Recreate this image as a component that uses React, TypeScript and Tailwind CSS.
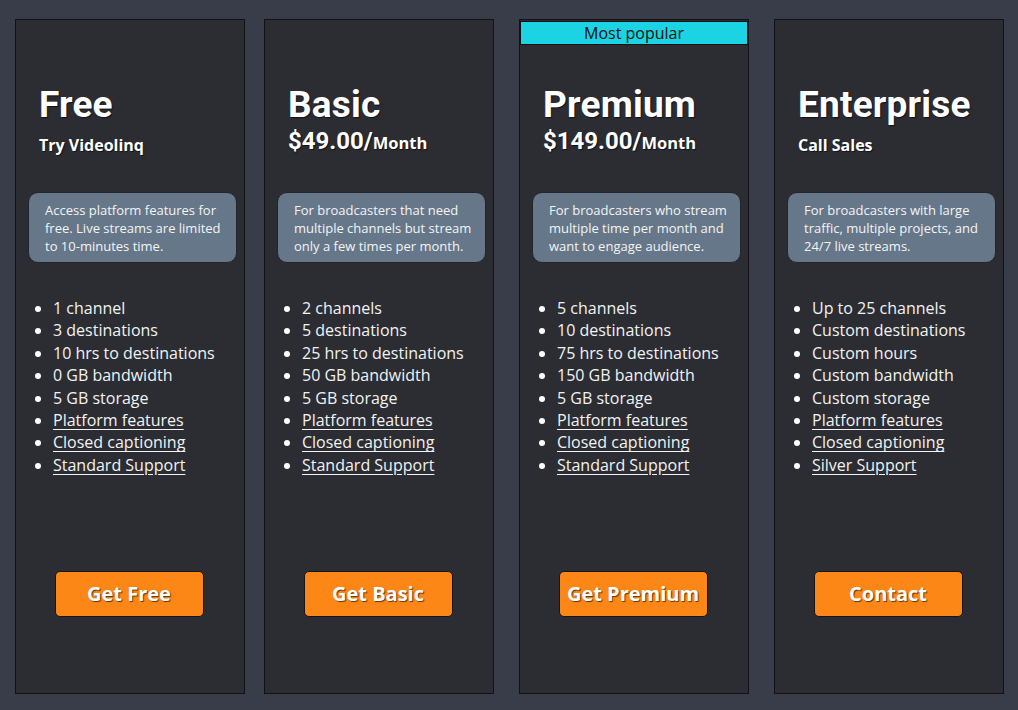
import React from "react";

type Plan = {
  name: string;
  price?: string;
  sub?: string;
  desc: string;
  features: string[];
  links: string[];
  cta: string;
  popular?: boolean;
};

const plans: Plan[] = [
  {
    name: "Free",
    sub: "Try Videolinq",
    desc: "Access platform features for free. Live streams are limited to 10-minutes time.",
    features: ["1 channel", "3 destinations", "10 hrs to destinations", "0 GB bandwidth", "5 GB storage"],
    links: ["Platform features", "Closed captioning", "Standard Support"],
    cta: "Get Free",
  },
  {
    name: "Basic",
    price: "$49.00",
    desc: "For broadcasters that need multiple channels but stream only a few times per month.",
    features: ["2 channels", "5 destinations", "25 hrs to destinations", "50 GB bandwidth", "5 GB storage"],
    links: ["Platform features", "Closed captioning", "Standard Support"],
    cta: "Get Basic",
  },
  {
    name: "Premium",
    price: "$149.00",
    desc: "For broadcasters who stream multiple time per month and want to engage audience.",
    features: ["5 channels", "10 destinations", "75 hrs to destinations", "150 GB bandwidth", "5 GB storage"],
    links: ["Platform features", "Closed captioning", "Standard Support"],
    cta: "Get Premium",
    popular: true,
  },
  {
    name: "Enterprise",
    sub: "Call Sales",
    desc: "For broadcasters with large traffic, multiple projects, and 24/7 live streams.",
    features: ["Up to 25 channels", "Custom destinations", "Custom hours", "Custom bandwidth", "Custom storage"],
    links: ["Platform features", "Closed captioning", "Silver Support"],
    cta: "Contact",
  },
];

const shadow = "[text-shadow:1px_1px_1px_rgba(0,0,0,0.6)]";

function PlanCard({ plan, className }: { plan: Plan; className?: string }) {
  return (
    <div
      className={`relative flex h-[675px] w-[230px] shrink-0 flex-col border border-[#111215] bg-[#2b2d33] ${className ?? ""}`}
    >
      {plan.popular && (
        <div className="absolute left-0 right-0 top-[1px] h-[24px] border border-[#111215] bg-[#1bd3e2] text-center text-[16px] leading-[22px] text-[#111]">
          Most popular
        </div>
      )}

      <div className="h-[172px] pl-[23px] pt-[66px] text-white">
        <h2 className={`font-['Roboto',sans-serif] text-[37px] font-bold leading-[37px] tracking-[0.2px] ${shadow}`}>
          {plan.name}
        </h2>
        {plan.price ? (
          <div className={`font-['Roboto',sans-serif] text-[24px] font-bold leading-[36px] ${shadow}`}>
            {plan.price}/<span className="font-['Open_Sans',sans-serif] text-[16.5px]">Month</span>
          </div>
        ) : (
          <div className={`mt-[10px] text-[16px] font-bold leading-[24px] ${shadow}`}>{plan.sub}</div>
        )}
      </div>

      <div className="ml-[12px] h-[71px] w-[209px] rounded-[10px] border border-[#22252b] bg-[#66778a] pl-[16px] pr-[10px] pt-[8px] text-[13px] leading-[18px] text-[#f4f4f4]">
        {plan.desc}
      </div>

      <ul className="ml-[37px] mt-[34px] list-disc text-[16px] leading-[22.4px] text-[#f2f2f2] marker:text-white">
        {plan.features.map((f) => (
          <li key={f}>{f}</li>
        ))}
        {plan.links.map((f) => (
          <li key={f}>
            <a href="#" className="underline underline-offset-[3px]">
              {f}
            </a>
          </li>
        ))}
      </ul>

      <div className="mb-[76px] mt-auto flex justify-center">
        <button
          className={`-ml-[2px] h-[46px] w-[149px] rounded-[5px] border border-[#15161a] bg-[#fd8716] text-[20px] font-bold text-white ${shadow}`}
        >
          {plan.cta}
        </button>
      </div>
    </div>
  );
}

export default function App() {
  return (
    <div className="flex min-h-screen bg-[#393c49] pl-[15px] pt-[19px] font-['Open_Sans',sans-serif]">
      <PlanCard plan={plans[0]} />
      <PlanCard plan={plans[1]} className="ml-[19px]" />
      <PlanCard plan={plans[2]} className="ml-[25px]" />
      <PlanCard plan={plans[3]} className="ml-[25px]" />
    </div>
  );
}
